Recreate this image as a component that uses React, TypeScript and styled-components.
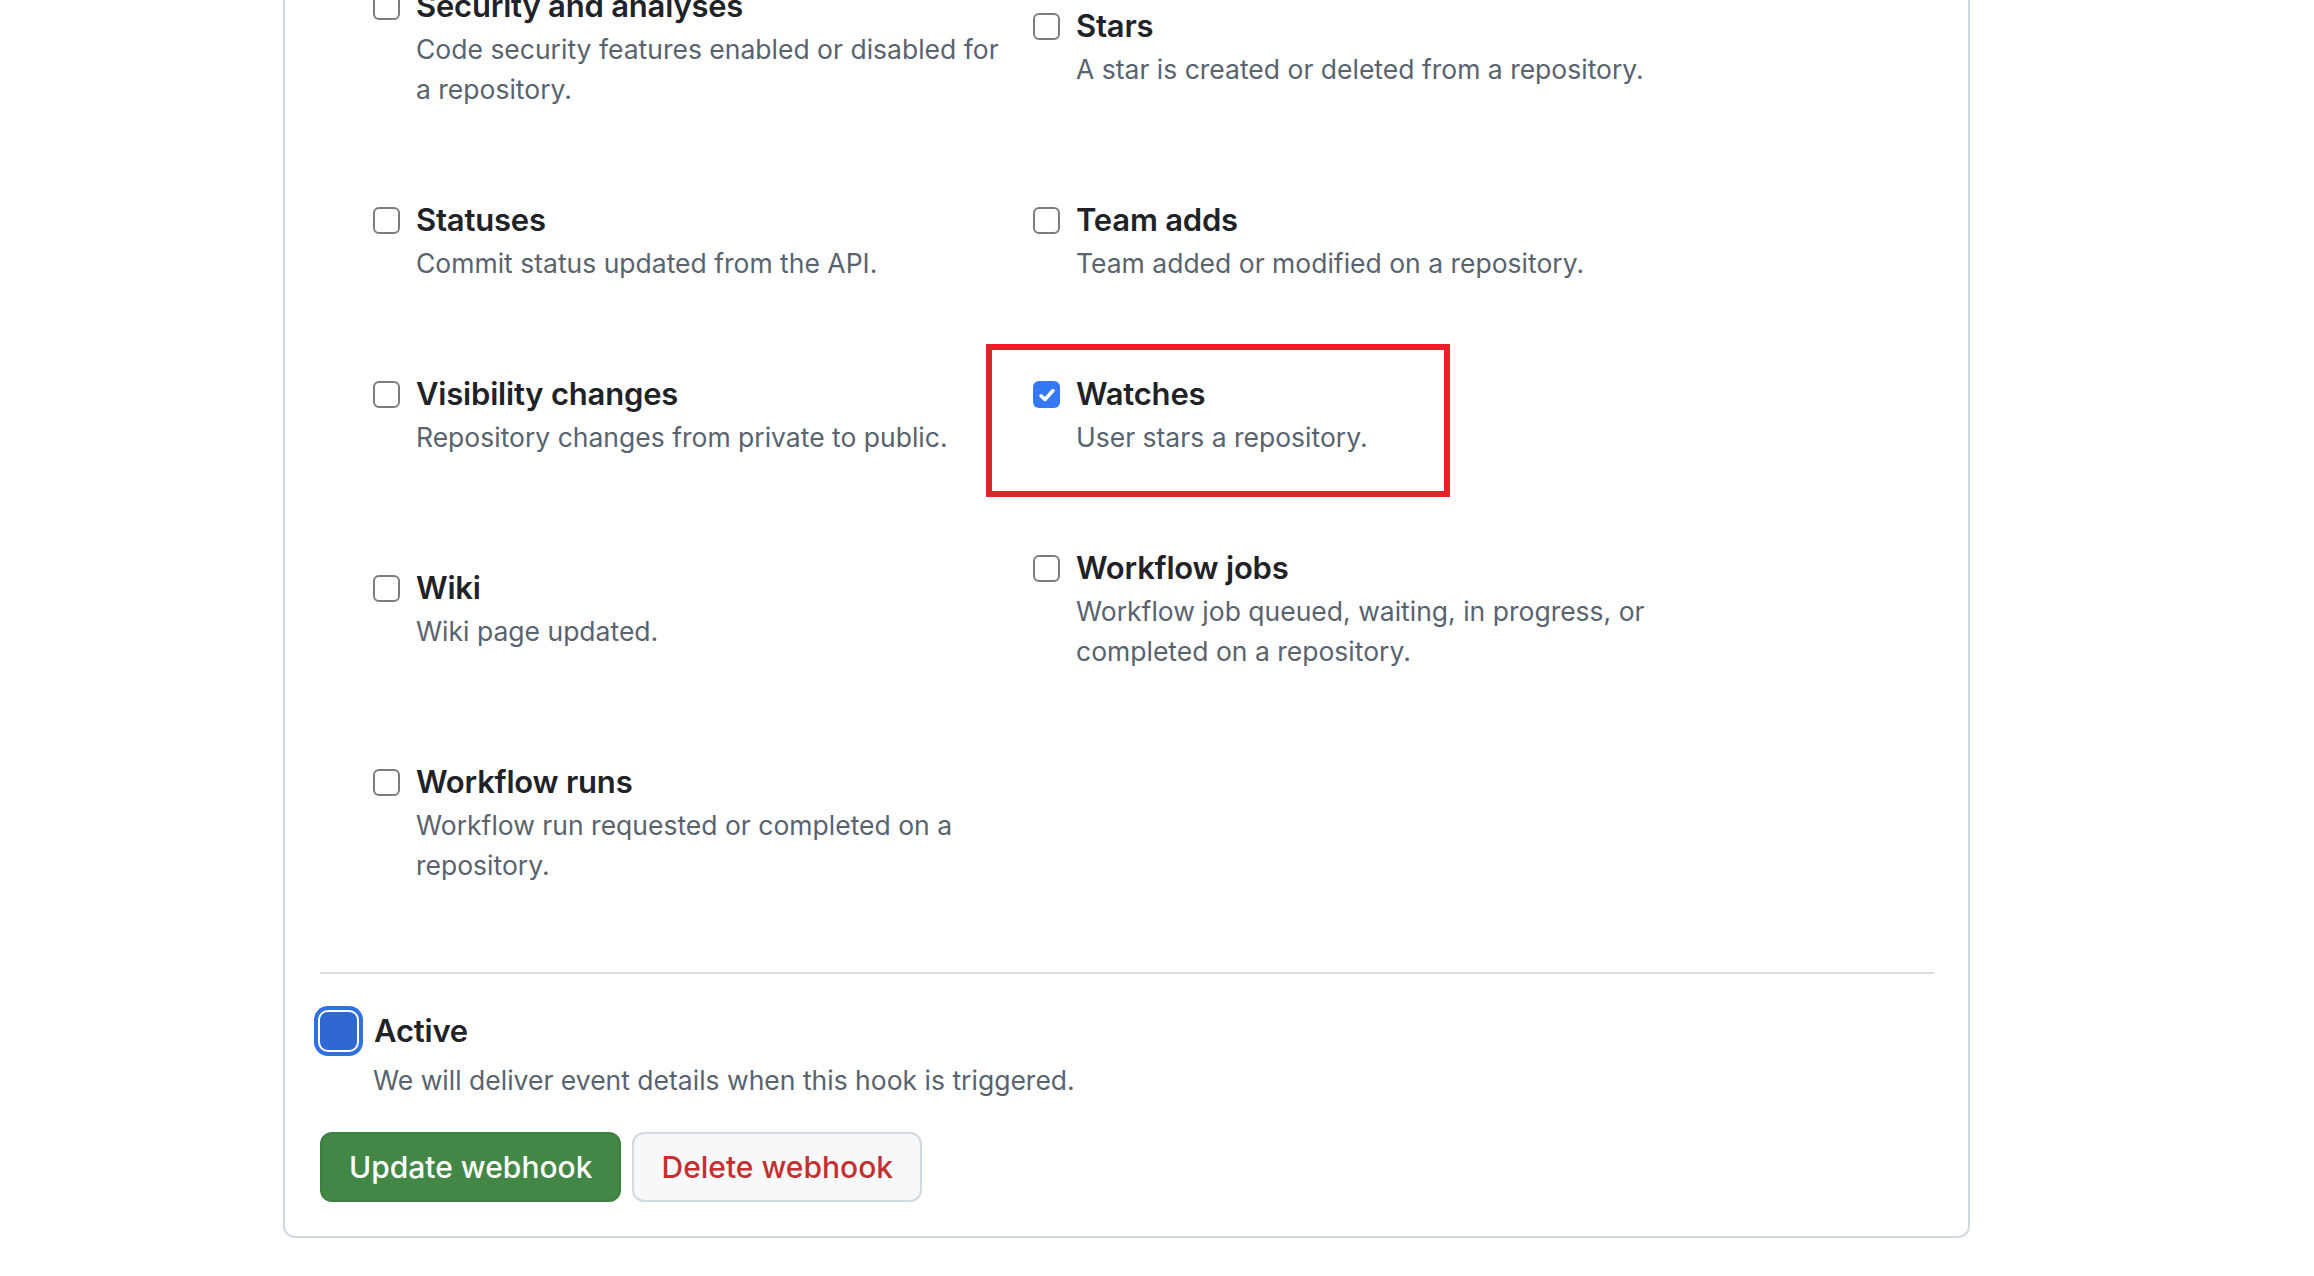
import React from "react";
import styled, { createGlobalStyle } from "styled-components";

const Global = createGlobalStyle`
  html, body { margin: 0; padding: 0; background: #ffffff; }
  body {
    font-family: Inter, "Noto Sans", "Liberation Sans", sans-serif;
    color: #1f2328;
    overflow: hidden;
  }
  * { box-sizing: border-box; }
`;

const Page = styled.div`
  padding-left: 283px;
  margin-top: -54px;
`;

const Panel = styled.section`
  width: 1687px;
  border: 2px solid #d1d9e0;
  border-radius: 12px;
  padding: 35px 34px 34px 35px;
  background: #ffffff;
`;

const EventGrid = styled.div`
  display: grid;
  grid-template-columns: 660px 660px;
  align-items: center;
  row-gap: 88px;
  margin-left: 53px;
  padding-bottom: 87px;
`;

const EventItem = styled.label`
  position: relative;
  display: flex;
  align-items: flex-start;
  gap: 16px;
`;

const Box = styled.span<{ $checked?: boolean }>`
  flex: none;
  width: 27px;
  height: 27px;
  margin-top: 10px;
  border-radius: 6px;
  display: flex;
  align-items: center;
  justify-content: center;
  border: ${(p) => (p.$checked ? "none" : "2px solid #7d7d7d")};
  background: ${(p) => (p.$checked ? "#3478f6" : "#ffffff")};
`;

const Texts = styled.div`
  display: flex;
  flex-direction: column;
`;

const Title = styled.div`
  font-size: 31px;
  font-weight: 600;
  line-height: 46px;
  color: #1f2328;
  letter-spacing: -0.2px;
`;

const Desc = styled.div`
  font-size: 26.5px;
  line-height: 40px;
  color: #59636e;
  max-width: 592px;
`;

const Highlight = styled.span`
  position: absolute;
  left: -47px;
  top: -27px;
  width: 464px;
  height: 153px;
  border: 6px solid #e8202a;
  pointer-events: none;
`;

const Divider = styled.hr`
  border: none;
  height: 2px;
  background: #d8dee4;
  margin: 0;
`;

const ActiveRow = styled.label`
  display: flex;
  align-items: center;
  gap: 17px;
  margin-top: 34px;
`;

const ActiveBox = styled.span`
  flex: none;
  width: 37px;
  height: 38px;
  border-radius: 8px;
  background: #2f67d3;
  box-shadow: 0 0 0 2px #ffffff, 0 0 0 6px #3170e2;
`;

const ActiveDesc = styled(Desc)`
  padding-left: 53px;
  margin-top: 6px;
  max-width: none;
`;

const Buttons = styled.div`
  display: flex;
  gap: 11px;
  margin-top: 32px;
`;

const Button = styled.button<{ $variant: "primary" | "danger" }>`
  height: 70px;
  margin: 0;
  padding: 0 27px;
  border-radius: 12px;
  font-family: Inter, "Noto Sans", "Liberation Sans", sans-serif;
  font-size: 30px;
  font-weight: 500;
  cursor: pointer;
  border: 2px solid ${(p) => (p.$variant === "primary" ? "#3d7f40" : "#d1d9e0")};
  background: ${(p) => (p.$variant === "primary" ? "#428746" : "#f6f8fa")};
  color: ${(p) => (p.$variant === "primary" ? "#ffffff" : "#c4302f")};
`;

type Ev = { title: string; desc: string; checked?: boolean; highlight?: boolean };

const events: Ev[] = [
  { title: "Security and analyses", desc: "Code security features enabled or disabled for a repository." },
  { title: "Stars", desc: "A star is created or deleted from a repository." },
  { title: "Statuses", desc: "Commit status updated from the API." },
  { title: "Team adds", desc: "Team added or modified on a repository." },
  { title: "Visibility changes", desc: "Repository changes from private to public." },
  { title: "Watches", desc: "User stars a repository.", checked: true, highlight: true },
  { title: "Wiki", desc: "Wiki page updated." },
  { title: "Workflow jobs", desc: "Workflow job queued, waiting, in progress, or completed on a repository." },
  { title: "Workflow runs", desc: "Workflow run requested or completed on a repository." },
];

const Check = () => (
  <svg width="20" height="20" viewBox="0 0 16 16" fill="none">
    <path d="M3.2 8.6 L6.4 11.6 L12.8 4.4" stroke="#ffffff" strokeWidth="2.8" strokeLinecap="round" strokeLinejoin="round" />
  </svg>
);

export default function App() {
  return (
    <>
      <Global />
      <Page>
        <Panel>
          <EventGrid>
            {events.map((e) => (
              <EventItem key={e.title}>
                <Box $checked={e.checked}>{e.checked && <Check />}</Box>
                <Texts>
                  <Title>{e.title}</Title>
                  <Desc>{e.desc}</Desc>
                </Texts>
                {e.highlight && <Highlight />}
              </EventItem>
            ))}
          </EventGrid>
          <Divider />
          <ActiveRow>
            <ActiveBox />
            <Title>Active</Title>
          </ActiveRow>
          <ActiveDesc>We will deliver event details when this hook is triggered.</ActiveDesc>
          <Buttons>
            <Button $variant="primary">Update webhook</Button>
            <Button $variant="danger">Delete webhook</Button>
          </Buttons>
        </Panel>
      </Page>
    </>
  );
}
